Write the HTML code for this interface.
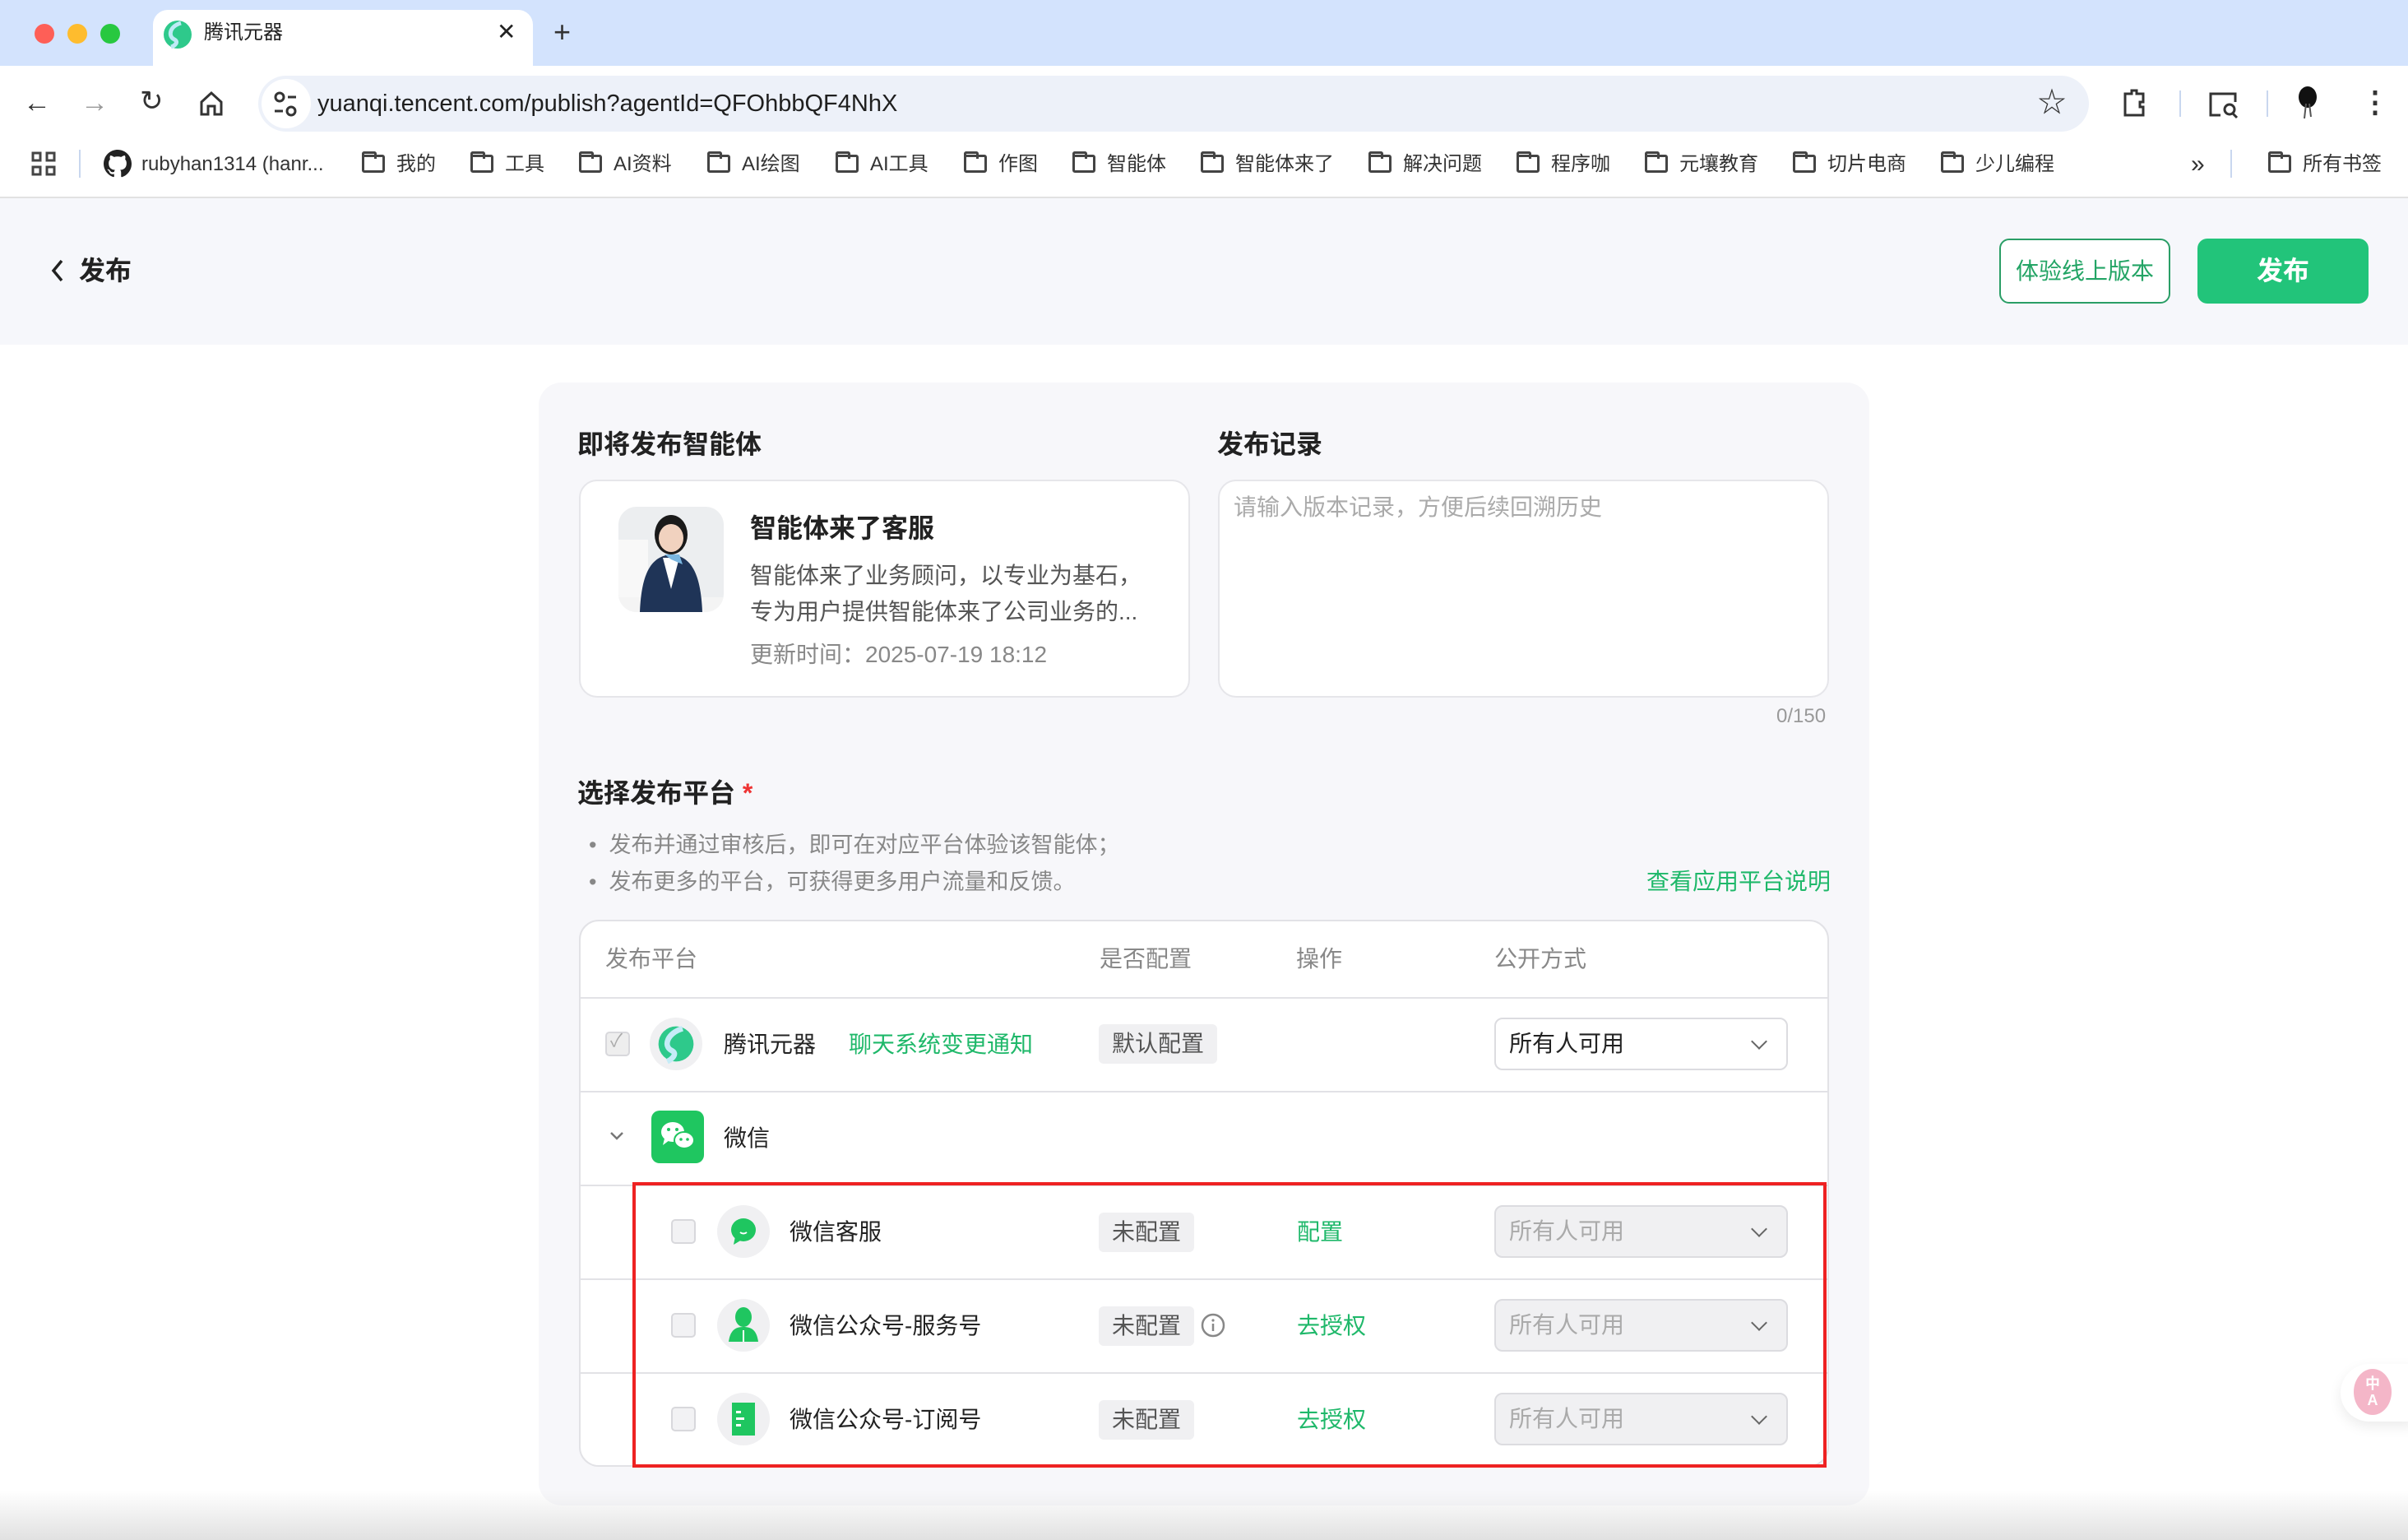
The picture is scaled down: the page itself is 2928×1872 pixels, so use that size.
<!DOCTYPE html>
<html><head><meta charset="utf-8"><style>
*{margin:0;padding:0;box-sizing:border-box}
body{width:2928px;height:1872px;position:relative;overflow:hidden;background:#fff;font-family:"Liberation Sans","Noto Sans CJK SC",sans-serif;color:#222}
.a{position:absolute}
.t{position:absolute;white-space:nowrap;line-height:1}
.bm{position:absolute;top:188px;font-size:24px;color:#333;white-space:nowrap;line-height:24px}
.fold{display:inline-block;width:28px;height:22px;border:3px solid #444;border-radius:3px;vertical-align:-3px;margin-right:14px;position:relative}
.fold:before{content:"";position:absolute;left:-3px;top:-7px;width:12px;height:6px;border:3px solid #444;border-bottom:none;border-radius:3px 3px 0 0}
.g{color:#1fb86a}
.row{position:absolute;left:704px;width:1520px;border-top:2px solid #e2e2e6}
.tag{position:absolute;height:48px;padding:0 16px;background:#f0f0f2;border-radius:6px;font-size:28px;line-height:48px;color:#555}
.sel{position:absolute;left:1817px;width:357px;height:64px;border:2px solid #dcdce0;border-radius:10px;font-size:28px;line-height:60px;padding-left:16px;color:#222;background:#fff}
.sel.d{background:#f0f0f2;color:#aaa}
.sel:after{content:"";position:absolute;right:26px;top:20px;width:12px;height:12px;border-right:2px solid #666;border-bottom:2px solid #666;transform:rotate(45deg)}
.cb{position:absolute;width:30px;height:30px;border:2px solid #d8d8dc;border-radius:5px;background:#f2f2f4}
.ic{position:absolute;width:64px;height:64px;border-radius:50%;background:#f0f0f2}
</style></head><body>
<!-- tab bar -->
<div class="a" style="left:0;top:0;width:2928px;height:80px;background:#d3e3fd"></div>
<div class="a" style="left:42px;top:29px;width:24px;height:24px;border-radius:50%;background:#fe5f57"></div>
<div class="a" style="left:82px;top:29px;width:24px;height:24px;border-radius:50%;background:#febc2e"></div>
<div class="a" style="left:122px;top:29px;width:24px;height:24px;border-radius:50%;background:#28c840"></div>
<div class="a" style="left:186px;top:12px;width:462px;height:70px;background:#fff;border-radius:18px 18px 0 0"></div>
<svg class="a" style="left:198px;top:24px" width="36" height="36" viewBox="0 0 36 36"><circle cx="18" cy="18" r="17" fill="#2ec98b"/><path d="M22 4 C8 8 6 20 14 24 C20 27 14 32 10 33" stroke="#bfeaf6" stroke-width="5" fill="none"/></svg>
<div class="t" style="left:248px;top:28px;font-size:24px">腾讯元器</div>
<div class="t" style="left:604px;top:25px;font-size:28px">✕</div>
<div class="t" style="left:673px;top:21px;font-size:36px;color:#333">+</div>
<!-- toolbar -->
<div class="a" style="left:0;top:80px;width:2928px;height:160px;background:#fff"></div>
<div class="t" style="left:28px;top:108px;font-size:34px;color:#333">←</div>
<div class="t" style="left:98px;top:108px;font-size:34px;color:#999">→</div>
<div class="t" style="left:170px;top:106px;font-size:34px;color:#333">↻</div>
<svg class="a" style="left:242px;top:110px" width="30" height="32" viewBox="0 0 30 32"><path d="M3 14 L15 3 L27 14 V29 H19 V19 H11 V29 H3 Z" fill="none" stroke="#333" stroke-width="3"/></svg>
<div class="a" style="left:314px;top:92px;width:2226px;height:68px;border-radius:34px;background:#edf1f9"></div>
<div class="a" style="left:318px;top:96px;width:60px;height:60px;border-radius:30px;background:#fff"></div>
<svg class="a" style="left:330px;top:110px" width="34" height="34" viewBox="0 0 34 34"><circle cx="10" cy="8" r="5" fill="none" stroke="#333" stroke-width="3"/><line x1="20" y1="8" x2="30" y2="8" stroke="#333" stroke-width="3"/><circle cx="24" cy="25" r="5" fill="none" stroke="#333" stroke-width="3"/><line x1="4" y1="25" x2="14" y2="25" stroke="#333" stroke-width="3"/></svg>
<div class="t" style="left:386px;top:112px;font-size:29px;color:#1f1f1f">yuanqi.tencent.com/publish?agentId=QFOhbbQF4NhX</div>
<div class="t" style="left:2478px;top:108px;font-size:34px;color:#333">☆</div>
<svg class="a" style="left:2578px;top:106px" width="36" height="40" viewBox="0 0 36 40"><path d="M6 8 H14 V4 H20 V8 H28 V18 H24 V24 H28 V34 H6 Z" fill="none" stroke="#333" stroke-width="3"/></svg>
<div class="a" style="left:2650px;top:110px;width:2px;height:32px;background:#c9d7ef"></div>
<svg class="a" style="left:2684px;top:110px" width="40" height="36" viewBox="0 0 40 36"><path d="M22 4 H4 V30 H16" fill="none" stroke="#333" stroke-width="3"/><path d="M4 4 H34 V14" fill="none" stroke="#333" stroke-width="3"/><circle cx="27" cy="23" r="6" fill="none" stroke="#333" stroke-width="3"/><line x1="31" y1="28" x2="36" y2="33" stroke="#333" stroke-width="3"/></svg>
<div class="a" style="left:2756px;top:110px;width:2px;height:32px;background:#c9d7ef"></div>
<svg class="a" style="left:2790px;top:104px" width="32" height="44" viewBox="0 0 32 44"><ellipse cx="16" cy="14" rx="11" ry="13" fill="#111"/><path d="M14 22 L12 40 M18 22 L20 38" stroke="#555" stroke-width="2"/></svg>
<div class="t" style="left:2870px;top:106px;font-size:36px;color:#333;font-weight:bold">⋮</div>
<!-- bookmarks -->
<svg class="a" style="left:38px;top:184px" width="30" height="30" viewBox="0 0 30 30" fill="none" stroke="#444" stroke-width="3"><rect x="2" y="2" width="9" height="9"/><rect x="19" y="2" width="9" height="9"/><rect x="2" y="19" width="9" height="9"/><rect x="19" y="19" width="9" height="9"/></svg>
<div class="a" style="left:96px;top:182px;width:2px;height:34px;background:#c9d7ef"></div>
<svg class="a" style="left:126px;top:182px" width="34" height="34" viewBox="0 0 16 16"><path fill="#222" d="M8 0C3.58 0 0 3.58 0 8c0 3.540 2.29 6.53 5.470 7.59.4.07.55-.17.55-.38v-1.33c-2.23.48-2.7-1.07-2.7-1.07-.36-.92-.89-1.17-.89-1.17-.73-.5.06-.49.06-.49.8.06 1.23.83 1.23.83.72 1.22 1.87.87 2.33.66.07-.52.28-.87.5-1.07-1.78-.2-3.64-.89-3.64-3.95 0-.87.31-1.59.82-2.150-.08-.2-.36-1.02.08-2.12 0 0 .67-.21 2.2.82a7.6 7.6 0 014 0c1.53-1.04 2.2-.82 2.2-.82.44 1.1.16 1.92.08 2.12.51.56.82 1.27.82 2.15 0 3.07-1.87 3.75-3.65 3.95.29.25.54.73.54 1.48v2.2c0 .21.15.46.55.38A8 8 0 0016 8c0-4.42-3.58-8-8-8z"/></svg>
<div class="bm" style="left:172px">rubyhan1314 (hanr...</div>
<div class="bm" style="left:440px"><span class="fold"></span>我的</div>
<div class="bm" style="left:572px"><span class="fold"></span>工具</div>
<div class="bm" style="left:704px"><span class="fold"></span>AI资料</div>
<div class="bm" style="left:860px"><span class="fold"></span>AI绘图</div>
<div class="bm" style="left:1016px"><span class="fold"></span>AI工具</div>
<div class="bm" style="left:1172px"><span class="fold"></span>作图</div>
<div class="bm" style="left:1304px"><span class="fold"></span>智能体</div>
<div class="bm" style="left:1460px"><span class="fold"></span>智能体来了</div>
<div class="bm" style="left:1664px"><span class="fold"></span>解决问题</div>
<div class="bm" style="left:1844px"><span class="fold"></span>程序咖</div>
<div class="bm" style="left:2000px"><span class="fold"></span>元壤教育</div>
<div class="bm" style="left:2180px"><span class="fold"></span>切片电商</div>
<div class="bm" style="left:2360px"><span class="fold"></span>少儿编程</div>
<div class="bm" style="left:2664px;font-size:30px">»</div>
<div class="a" style="left:2712px;top:182px;width:2px;height:34px;background:#c9d7ef"></div>
<div class="bm" style="left:2758px"><span class="fold"></span>所有书签</div>
<div class="a" style="left:0;top:239px;width:2928px;height:2px;background:#e2e2e2"></div>
<!-- header -->
<div class="a" style="left:0;top:241px;width:2928px;height:178px;background:#f6f7fb"></div>
<svg class="a" style="left:62px;top:314px" width="16" height="30" viewBox="0 0 16 30"><path d="M13 3 L3 15 L13 27" fill="none" stroke="#222" stroke-width="3.5"/></svg>
<div class="t" style="left:96px;top:313px;font-size:32px;font-weight:bold">发布</div>
<div class="a" style="left:2431px;top:290px;width:208px;height:79px;border:2px solid #2a9e66;border-radius:12px;background:#fff;color:#23a465;font-size:28px;line-height:75px;text-align:center">体验线上版本</div>
<div class="a" style="left:2672px;top:290px;width:208px;height:79px;border-radius:12px;background:#22c47a;color:#fff;font-size:32px;line-height:79px;text-align:center;font-weight:bold">发布</div>
<!-- panel -->
<div class="a" style="left:655px;top:465px;width:1618px;height:1365px;background:#f7f7fa;border-radius:28px"></div>
<div class="t" style="left:702px;top:524px;font-size:32px;font-weight:bold">即将发布智能体</div>
<div class="t" style="left:1480px;top:524px;font-size:32px;font-weight:bold">发布记录</div>
<div class="a" style="left:704px;top:583px;width:743px;height:265px;background:#fff;border:2px solid #e6e6ea;border-radius:22px"></div>
<svg class="a" style="left:752px;top:616px;border-radius:22px" width="128" height="128" viewBox="0 0 128 128"><rect width="128" height="128" fill="#eceef0"/><rect x="0" y="40" width="36" height="70" fill="#f8f8f8"/><rect x="0" y="110" width="128" height="18" fill="#f4f4f4"/><path d="M26 128 C28 80 40 60 64 58 C88 60 100 80 102 128 Z" fill="#1f3457"/><path d="M54 62 L64 100 L74 62 Z" fill="#fff"/><ellipse cx="64" cy="34" rx="20" ry="24" fill="#1a1a1a"/><ellipse cx="64" cy="38" rx="15" ry="17" fill="#f1d2bf"/><path d="M56 58 L74 58 L78 70 L64 64 Z" fill="#7ab6e0"/></svg>
<div class="t" style="left:912px;top:626px;font-size:32px;font-weight:bold">智能体来了客服</div>
<div class="t" style="left:912px;top:686px;font-size:28px;color:#555">智能体来了业务顾问，以专业为基石，</div>
<div class="t" style="left:912px;top:730px;font-size:28px;color:#555">专为用户提供智能体来了公司业务的...</div>
<div class="t" style="left:912px;top:782px;font-size:28px;color:#888">更新时间：2025-07-19 18:12</div>
<div class="a" style="left:1481px;top:583px;width:743px;height:265px;background:#fff;border:2px solid #e6e6ea;border-radius:22px"></div>
<div class="t" style="left:1500px;top:603px;font-size:28px;color:#aaa">请输入版本记录，方便后续回溯历史</div>
<div class="t" style="left:2160px;top:859px;font-size:24px;color:#999">0/150</div>
<div class="t" style="left:702px;top:948px;font-size:32px;font-weight:bold">选择发布平台 <span style="color:#e33">*</span></div>
<div class="t" style="left:716px;top:1014px;font-size:27px;color:#888">•&nbsp; 发布并通过审核后，即可在对应平台体验该智能体；</div>
<div class="t" style="left:716px;top:1059px;font-size:27px;color:#888">•&nbsp; 发布更多的平台，可获得更多用户流量和反馈。</div>
<div class="t g" style="left:2002px;top:1058px;font-size:28px">查看应用平台说明</div>
<!-- table -->
<div class="a" style="left:704px;top:1118px;width:1520px;height:665px;background:#fff;border:2px solid #e2e2e6;border-radius:24px;overflow:hidden"></div>
<div class="t" style="left:736px;top:1152px;font-size:28px;color:#888">发布平台</div>
<div class="t" style="left:1337px;top:1152px;font-size:28px;color:#888">是否配置</div>
<div class="t" style="left:1576px;top:1152px;font-size:28px;color:#888">操作</div>
<div class="t" style="left:1817px;top:1152px;font-size:28px;color:#888">公开方式</div>
<div class="row" style="top:1212px"></div>
<div class="row" style="top:1326px"></div>
<div class="row" style="top:1440px"></div>
<div class="row" style="top:1554px"></div>
<div class="row" style="top:1668px"></div>
<!-- row 1 -->
<div class="cb" style="left:736px;top:1254px;background:#eee"></div>
<div class="t" style="left:742px;top:1254px;font-size:22px;color:#aaa">✓</div>
<div class="ic" style="left:790px;top:1237px"></div>
<svg class="a" style="left:798px;top:1245px" width="48" height="48" viewBox="0 0 36 36"><circle cx="18" cy="18" r="16" fill="#2ec98b"/><path d="M24 4 C10 8 6 20 14 24 C20 27 14 32 10 34" stroke="#c5ecf7" stroke-width="5" fill="none"/></svg>
<div class="t" style="left:880px;top:1256px;font-size:28px">腾讯元器</div>
<div class="t g" style="left:1032px;top:1256px;font-size:28px">聊天系统变更通知</div>
<div class="tag" style="left:1336px;top:1245px">默认配置</div>
<div class="sel" style="left:1817px;top:1237px">所有人可用</div>
<!-- row 2 -->
<svg class="a" style="left:740px;top:1374px" width="20" height="14" viewBox="0 0 20 14"><path d="M3 3 L10 10 L17 3" fill="none" stroke="#777" stroke-width="2.5"/></svg>
<div class="a" style="left:792px;top:1350px;width:64px;height:64px;border-radius:10px;background:#1fc660"></div>
<svg class="a" style="left:800px;top:1360px" width="48" height="44" viewBox="0 0 48 44"><ellipse cx="18" cy="16" rx="14" ry="12" fill="#fff"/><path d="M8 24 L6 32 L14 26 Z" fill="#fff"/><ellipse cx="32" cy="26" rx="12" ry="10" fill="#fff" stroke="#1fc660" stroke-width="2"/><circle cx="13" cy="13" r="2" fill="#1fc660"/><circle cx="23" cy="13" r="2" fill="#1fc660"/><circle cx="28" cy="25" r="1.8" fill="#1fc660"/><circle cx="36" cy="25" r="1.8" fill="#1fc660"/></svg>
<div class="t" style="left:880px;top:1370px;font-size:28px">微信</div>
<!-- row 3 -->
<div class="cb" style="left:816px;top:1482px"></div>
<div class="ic" style="left:872px;top:1465px"></div>
<svg class="a" style="left:880px;top:1473px" width="48" height="48" viewBox="0 0 48 48"><ellipse cx="24" cy="22" rx="15" ry="14" fill="#1fc660"/><path d="M14 30 L12 40 L22 34 Z" fill="#1fc660"/><path d="M20 25 Q24 28 28 25" stroke="#fff" stroke-width="2" fill="none"/></svg>
<div class="t" style="left:960px;top:1484px;font-size:28px">微信客服</div>
<div class="tag" style="left:1336px;top:1474px">未配置</div>
<div class="t g" style="left:1577px;top:1484px;font-size:28px">配置</div>
<div class="sel d" style="left:1817px;top:1465px">所有人可用</div>
<!-- row 4 -->
<div class="cb" style="left:816px;top:1596px"></div>
<div class="ic" style="left:872px;top:1579px"></div>
<svg class="a" style="left:880px;top:1585px" width="48" height="52" viewBox="0 0 48 52"><ellipse cx="24" cy="16" rx="10" ry="12" fill="#1fc660"/><path d="M6 46 C8 32 14 28 24 28 C34 28 40 32 42 46 Z" fill="#1fc660"/><path d="M24 32 L24 46" stroke="#fff" stroke-width="2"/></svg>
<div class="t" style="left:960px;top:1598px;font-size:28px">微信公众号-服务号</div>
<div class="tag" style="left:1336px;top:1588px">未配置</div>
<svg class="a" style="left:1460px;top:1596px" width="30" height="30" viewBox="0 0 30 30"><circle cx="15" cy="15" r="13" fill="none" stroke="#888" stroke-width="2.5"/><line x1="15" y1="13" x2="15" y2="22" stroke="#888" stroke-width="2.5"/><circle cx="15" cy="9" r="1.6" fill="#888"/></svg>
<div class="t g" style="left:1577px;top:1598px;font-size:28px">去授权</div>
<div class="sel d" style="left:1817px;top:1579px">所有人可用</div>
<!-- row 5 -->
<div class="cb" style="left:816px;top:1710px"></div>
<div class="ic" style="left:872px;top:1693px"></div>
<svg class="a" style="left:886px;top:1703px" width="36" height="44" viewBox="0 0 36 44"><rect x="4" y="2" width="28" height="40" fill="#1fc660"/><rect x="9" y="12" width="6" height="3" fill="#fff"/><rect x="9" y="20" width="10" height="3" fill="#fff"/><rect x="9" y="28" width="6" height="3" fill="#fff"/></svg>
<div class="t" style="left:960px;top:1712px;font-size:28px">微信公众号-订阅号</div>
<div class="tag" style="left:1336px;top:1702px">未配置</div>
<div class="t g" style="left:1577px;top:1712px;font-size:28px">去授权</div>
<div class="sel d" style="left:1817px;top:1693px">所有人可用</div>
<!-- red box -->
<div class="a" style="left:769px;top:1437px;width:1452px;height:347px;border:4px solid #ee2222"></div>
<!-- translate -->
<div class="a" style="left:2846px;top:1658px;width:90px;height:70px;border-radius:35px 0 0 35px;background:#fff;box-shadow:0 6px 16px rgba(0,0,0,.08)"></div>
<div class="a" style="left:2862px;top:1664px;width:46px;height:56px;border-radius:50%;background:#f4b6c8;color:#fff;font-size:18px;line-height:20px;text-align:center;padding-top:8px;font-weight:bold">中<br>A</div>
<div class="a" style="left:0;top:1812px;width:2928px;height:60px;background:linear-gradient(rgba(230,230,230,0),rgba(225,225,225,1))"></div>
</body></html>
